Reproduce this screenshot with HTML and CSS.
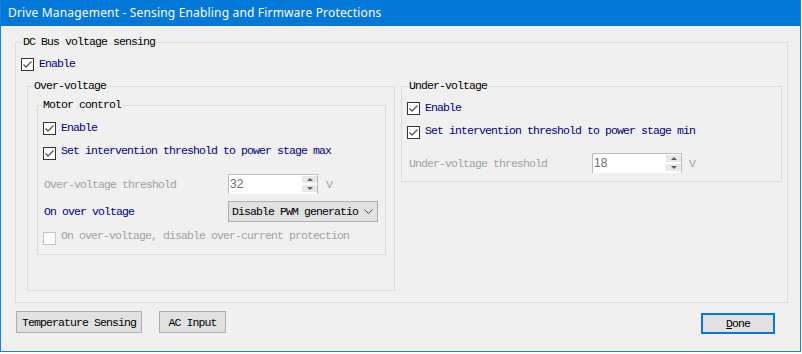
FILE: index.html
```html
<!DOCTYPE html>
<html lang="en">
<head>
    <meta charset="UTF-8">
    <title>Drive Management - Sensing Enabling and Firmware Protections</title>
    <link rel="stylesheet" href="styles.css">
</head>
<body>
    <div class="window">
        <div class="titlebar">Drive Management - Sensing Enabling and Firmware Protections</div>

        <div class="client">
            <fieldset class="group dcbus">
                <legend>DC Bus voltage sensing</legend>
                <div class="dcbus-body">
                    <label class="check first">
                        <span class="box"><svg viewBox="0 0 11 11"><path d="M1.5 5.5 L4 8 L9.5 2.5"/></svg></span>
                        <span class="text">Enable</span>
                    </label>

                    <div class="columns">
                        <fieldset class="group over">
                            <legend>Over-voltage</legend>
                            <fieldset class="group motor">
                                <legend>Motor control</legend>
                                <label class="check first">
                                    <span class="box"><svg viewBox="0 0 11 11"><path d="M1.5 5.5 L4 8 L9.5 2.5"/></svg></span>
                                    <span class="text">Enable</span>
                                </label>
                                <label class="check top">
                                    <span class="box"><svg viewBox="0 0 11 11"><path d="M1.5 5.5 L4 8 L9.5 2.5"/></svg></span>
                                    <span class="text">Set intervention threshold to power stage max</span>
                                </label>

                                <div class="field spin-row">
                                    <span class="field-label disabled">Over-voltage threshold</span>
                                    <div class="spin">
                                        <span class="spin-value">32</span>
                                        <span class="spin-arrows">
                                            <span class="arrow up"></span>
                                            <span class="arrow down"></span>
                                        </span>
                                    </div>
                                    <span class="unit">V</span>
                                </div>

                                <div class="field combo-row">
                                    <span class="field-label blue">On over voltage</span>
                                    <div class="combo">
                                        <span>Disable PWM generatio</span>
                                        <svg class="chevron" viewBox="0 0 9 5"><path d="M0.5 0.5 L4.5 4.5 L8.5 0.5"/></svg>
                                    </div>
                                </div>

                                <label class="check top off">
                                    <span class="box"></span>
                                    <span class="text">On over-voltage, disable over-current protection</span>
                                </label>
                            </fieldset>
                        </fieldset>

                        <fieldset class="group under">
                            <legend>Under-voltage</legend>
                            <label class="check first">
                                <span class="box"><svg viewBox="0 0 11 11"><path d="M1.5 5.5 L4 8 L9.5 2.5"/></svg></span>
                                <span class="text">Enable</span>
                            </label>
                            <label class="check top">
                                <span class="box"><svg viewBox="0 0 11 11"><path d="M1.5 5.5 L4 8 L9.5 2.5"/></svg></span>
                                <span class="text">Set intervention threshold to power stage min</span>
                            </label>

                            <div class="field spin-row">
                                <span class="field-label disabled">Under-voltage threshold</span>
                                <div class="spin">
                                    <span class="spin-value">18</span>
                                    <span class="spin-arrows">
                                        <span class="arrow up"></span>
                                        <span class="arrow down"></span>
                                    </span>
                                </div>
                                <span class="unit">V</span>
                            </div>
                        </fieldset>
                    </div>
                </div>
            </fieldset>

            <div class="buttons">
                <button class="btn temp">Temperature Sensing</button>
                <button class="btn ac">AC Input</button>
                <button class="btn done"><u>D</u>one</button>
            </div>
        </div>
    </div>
</body>
</html>
```

FILE: styles.css
```css
body {
    margin: 0;
    background: #ffffff;
}
.window {
    width: 799px;
    height: 351px;
    border: 1px solid #1a7fd6;
    border-top: 0;
    background: #f0f0f0;
    font-family: "Liberation Mono", monospace;
    font-size: 11.5px;
    letter-spacing: -0.9px;
    color: #000;
}
.titlebar {
    height: 26px;
    line-height: 26px;
    padding-left: 7px;
    background: #0078d7;
    color: #fff;
    font-family: "Noto Sans", sans-serif;
    font-size: 12px;
    letter-spacing: 0.17px;
}
.client {
    padding: 9px 12px 0 14px;
}

/* group boxes */
fieldset {
    box-sizing: border-box;
    margin: 0;
    padding: 0;
    min-width: 0;
    border: 1px solid #dcdcdc;
}
legend {
    padding: 0 1px;
    line-height: 14px;
}
.dcbus legend { margin-left: 6px; }
.dcbus-body {
    padding: 0 5px 11px 5px;
}
.columns {
    display: flex;
    align-items: flex-start;
    gap: 6px;
    margin: 8px 0 0 6px;
}
.over {
    width: 368px;
    padding: 0 8px 35px 9px;
}
.over legend { margin-left: -4px; }
.motor {
    width: 349px;
    margin-top: 5px;
    padding: 0 0 9px 5px;
}
.motor legend { margin-left: -1px; }
.under {
    width: 381px;
    padding: 0 0 8px 5px;
}
.under legend { margin-left: 1px; }

/* checkboxes */
.check {
    display: flex;
    align-items: center;
    gap: 5px;
    height: 14px;
    color: #000080;
}
.check .text {
    line-height: 14px;
    white-space: nowrap;
}
.check.first { margin-top: 8px; }
.motor .check.first { margin-top: 9px; }
.check.top {
    align-items: flex-start;
    height: auto;
    margin-top: 9px;
}
.check.top .box { margin-top: 3px; }
.under .check.top .box { margin-top: 2px; }
.box {
    box-sizing: border-box;
    width: 13px;
    height: 13px;
    flex: none;
    border: 1px solid #333;
    background: #fff;
}
.box svg {
    display: block;
    width: 11px;
    height: 11px;
    fill: none;
    stroke: #555;
    stroke-width: 1.3;
}
.check.off { color: #a0a0a0; margin-top: 7px; }
.check.off .box { border-color: #c4c4c4; }

/* label + control rows */
.field {
    display: flex;
    align-items: center;
    padding-left: 1px;
}
.field-label {
    width: 184px;
    flex: none;
}
.under .field { padding-left: 2px; }
.under .field-label { width: 183px; }
.spin-row { margin-top: 14px; }
.combo-row { margin-top: 7px; }
.disabled { color: #a0a0a0; }
.blue { color: #000080; }
.unit {
    margin-left: 8px;
    color: #a0a0a0;
}
.under .unit { margin-left: 7px; }

.spin {
    box-sizing: border-box;
    display: flex;
    width: 90px;
    height: 20px;
    background: #fff;
    border: 1px solid #bdbdbd;
    border-bottom: 0;
}
.spin-value {
    flex: 1;
    padding-left: 1px;
    line-height: 18px;
    font-family: "Liberation Sans", sans-serif;
    font-size: 12px;
    letter-spacing: 0;
    color: #6d6d6d;
}
.spin-arrows {
    display: flex;
    flex-direction: column;
    gap: 2px;
    width: 15px;
    padding-top: 1px;
}
.arrow {
    position: relative;
    height: 7px;
    background: #e8e8e8;
}
.arrow::after {
    content: "";
    position: absolute;
    left: 5px;
    top: 2px;
    border-left: 3px solid transparent;
    border-right: 3px solid transparent;
}
.arrow.up::after { border-bottom: 3px solid #5a5a5a; }
.arrow.down::after { border-top: 3px solid #5a5a5a; }

.combo {
    box-sizing: border-box;
    display: flex;
    align-items: center;
    justify-content: space-between;
    width: 150px;
    height: 21px;
    padding: 0 4px 0 3px;
    background: #e1e1e1;
    border: 1px solid #adadad;
}
.chevron {
    width: 9px;
    height: 5px;
    fill: none;
    stroke: #444;
    stroke-width: 1;
}

/* bottom buttons */
.buttons {
    display: flex;
    align-items: flex-start;
    margin-top: 8px;
    padding-left: 1px;
}
.btn {
    box-sizing: border-box;
    height: 22px;
    padding: 0;
    background: #e1e1e1;
    border: 1px solid #adadad;
    font-family: inherit;
    font-size: 11.5px;
    letter-spacing: -0.9px;
    color: #000;
}
.temp { width: 126px; }
.ac {
    width: 67px;
    margin-left: 17px;
}
.done {
    width: 74px;
    height: 21px;
    margin: 2px 13px 0 auto;
    border: 2px solid #0078d7;
}
```
